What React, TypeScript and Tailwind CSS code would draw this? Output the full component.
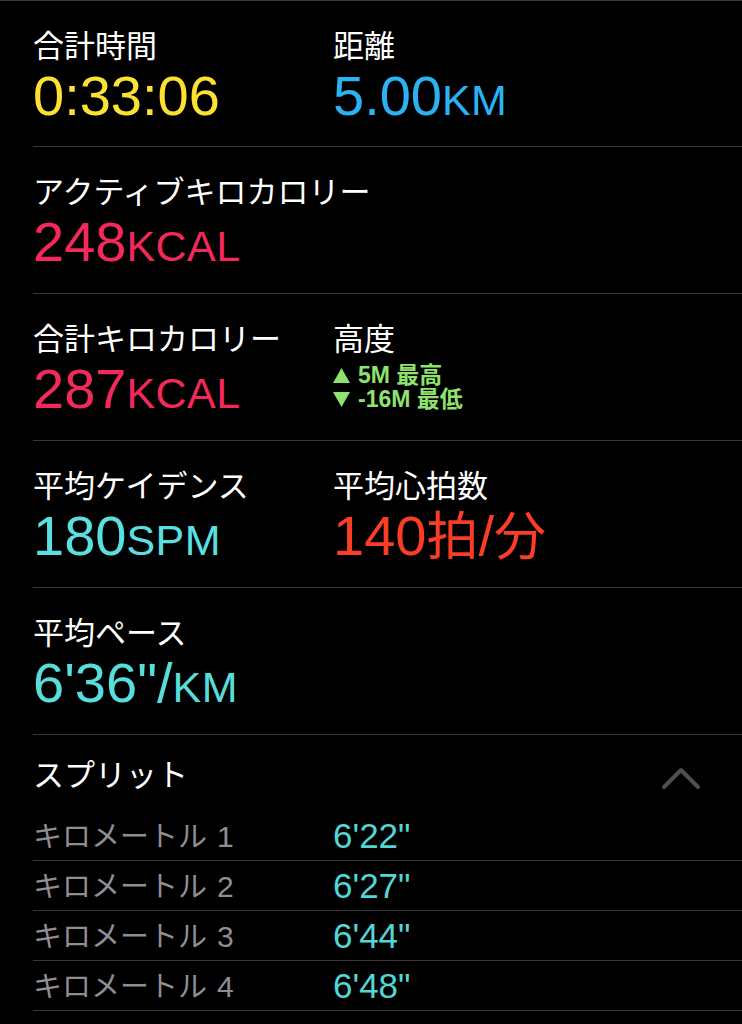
import React from 'react';

const jp = "font-['Noto_Sans_CJK_JP',sans-serif]";
const num = "font-['Liberation_Sans','Noto_Sans_CJK_JP',sans-serif]";

function Label({ children }: { children: React.ReactNode }) {
  return <div className={`${jp} text-[31px] leading-[36px] text-white`}>{children}</div>;
}

function Value({ color, children }: { color: string; children: React.ReactNode }) {
  return (
    <div className={`${num} mt-[6px] text-[56px] leading-[56px] whitespace-nowrap ${color}`}>
      {children}
    </div>
  );
}

function Unit({ children }: { children: React.ReactNode }) {
  return <span className="text-[43px] tracking-[0.01em]">{children}</span>;
}

function Jp({ children }: { children: React.ReactNode }) {
  return <span className={`${jp} text-[52px] leading-[40px]`}>{children}</span>;
}

function Triangle({ down }: { down?: boolean }) {
  return (
    <svg width="17" height="15" viewBox="0 0 17 15" className="shrink-0">
      <polygon points={down ? '0,0 17,0 8.5,15' : '8.5,0 17,15 0,15'} fill="#8ee26e" />
    </svg>
  );
}

const splits = [
  { km: 1, pace: `6'22"` },
  { km: 2, pace: `6'27"` },
  { km: 3, pace: `6'44"` },
  { km: 4, pace: `6'48"` },
];

export default function App() {
  return (
    <div className="w-[742px] h-[1024px] bg-black overflow-hidden border-t border-[#3a3a3c]">
      <div className="pl-[33px]">
        <section className="h-[146px] pt-[25px] border-b border-[#38383a] grid grid-cols-[300px_1fr]">
          <div>
            <Label>合計時間</Label>
            <Value color="text-[#fbe232]">0:33:06</Value>
          </div>
          <div>
            <Label>距離</Label>
            <Value color="text-[#2ab2f2]">
              5.00<Unit>KM</Unit>
            </Value>
          </div>
        </section>

        <section className="h-[147px] pt-[25px] border-b border-[#38383a]">
          <Label>アクティブキロカロリー</Label>
          <Value color="text-[#f3295b]">
            248<Unit>KCAL</Unit>
          </Value>
        </section>

        <section className="h-[147px] pt-[25px] border-b border-[#38383a] grid grid-cols-[300px_1fr]">
          <div>
            <Label>合計キロカロリー</Label>
            <Value color="text-[#f3295b]">
              287<Unit>KCAL</Unit>
            </Value>
          </div>
          <div>
            <Label>高度</Label>
            <div className={`${num} mt-[8px] text-[23px] leading-[24px] font-semibold text-[#8ee26e]`}>
              <div className="flex items-center gap-[8px]">
                <Triangle />
                <span>5M 最高</span>
              </div>
              <div className="flex items-center gap-[8px]">
                <Triangle down />
                <span>-16M 最低</span>
              </div>
            </div>
          </div>
        </section>

        <section className="h-[147px] pt-[25px] border-b border-[#38383a] grid grid-cols-[300px_1fr]">
          <div>
            <Label>平均ケイデンス</Label>
            <Value color="text-[#5ae0e2]">
              180<Unit>SPM</Unit>
            </Value>
          </div>
          <div>
            <Label>平均心拍数</Label>
            <Value color="text-[#fb3d26]">
              140<Jp>拍</Jp>/<Jp>分</Jp>
            </Value>
          </div>
        </section>

        <section className="h-[147px] pt-[25px] border-b border-[#38383a]">
          <Label>平均ペース</Label>
          <Value color="text-[#55dedc]">
            6'36"/<Unit>KM</Unit>
          </Value>
        </section>

        <div className="h-[76px] flex items-center justify-between pr-[41px]">
          <Label>スプリット</Label>
          <svg width="40" height="24" viewBox="0 0 40 24" className="mt-[10px]">
            <polyline
              points="3,21 20,4 37,21"
              fill="none"
              stroke="#4f4f52"
              strokeWidth="4"
              strokeLinecap="round"
              strokeLinejoin="round"
            />
          </svg>
        </div>

        {splits.map((s) => (
          <div
            key={s.km}
            className="h-[50px] border-b border-[#38383a] grid grid-cols-[300px_1fr] items-center"
          >
            <div className="flex items-baseline text-[#8e8e93] leading-[34px]">
              <span className={`${jp} text-[29px]`}>キロメートル</span>
              <span className={`${num} text-[30px] ml-[10px]`}>{s.km}</span>
            </div>
            <div className={`${num} text-[35px] leading-[34px] text-[#52d6d6]`}>{s.pace}</div>
          </div>
        ))}
      </div>
    </div>
  );
}
